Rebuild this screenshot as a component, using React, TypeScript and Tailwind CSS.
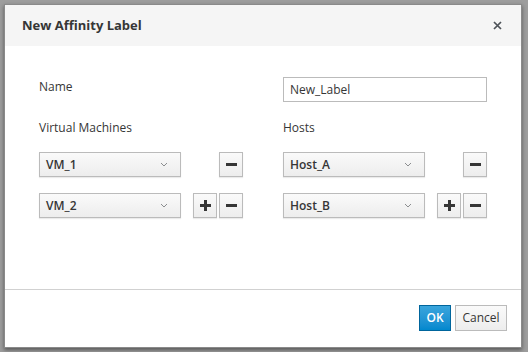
import React from 'react';

const font = { fontFamily: '"Open Sans", "Noto Sans", sans-serif' };

function Chevron() {
  return (
    <svg width="8" height="5" viewBox="0 0 8 5" className="text-[#8b8d8f]">
      <path d="M1 1 L4 4 L7 1" fill="none" stroke="currentColor" strokeWidth="1" />
    </svg>
  );
}

function Select({ value }: { value: string }) {
  return (
    <div className="w-[143px] h-[25px] flex items-center justify-between pl-[6px] pr-[12px] border border-[#bbbbbb] bg-gradient-to-b from-[#fafafa] to-[#ededed] shadow-[0_1px_1px_rgba(3,3,3,0.08)] text-[12px] font-semibold text-[#363636]">
      <span>{value}</span>
      <Chevron />
    </div>
  );
}

function IconBtn({ kind, hidden }: { kind: 'plus' | 'minus'; hidden?: boolean }) {
  return (
    <div
      className={
        'w-[24px] h-[25px] flex items-center justify-center border border-[#bbbbbb] bg-gradient-to-b from-[#fafafa] to-[#ededed] shadow-[0_1px_1px_rgba(3,3,3,0.08)] ' +
        (hidden ? 'invisible' : '')
      }
    >
      <svg width="11" height="11" viewBox="0 0 11 11">
        <rect x="0" y="4" width="11" height="3" fill="#363636" />
        {kind === 'plus' && <rect x="4" y="0" width="3" height="11" fill="#363636" />}
      </svg>
    </div>
  );
}

function Row({ value, plus }: { value: string; plus?: boolean }) {
  return (
    <div className="flex items-center">
      <Select value={value} />
      <div className="ml-[12px] flex gap-[2px]">
        <IconBtn kind="plus" hidden={!plus} />
        <IconBtn kind="minus" />
      </div>
    </div>
  );
}

export default function App() {
  return (
    <div className="w-[528px] h-[352px] bg-[#9d9d9d] pt-[4px] pl-[4px]" style={font}>
      <div className="w-[518px] h-[344px] bg-white border border-[#8a8a8a] shadow-[0_2px_4px_rgba(0,0,0,0.45)] flex flex-col">
        {/* Header */}
        <div className="h-[41px] bg-[#f5f5f5] flex items-center justify-between pl-[17px] pr-[19px]">
          <h4 className="text-[13px] font-bold text-[#363636]">New Affinity Label</h4>
          <svg width="9" height="9" viewBox="0 0 9 9">
            <path d="M1 1 L8 8 M8 1 L1 8" stroke="#4d5258" strokeWidth="1.7" />
          </svg>
        </div>

        {/* Body */}
        <div className="flex-1 pt-[31px] pl-[34px] flex gap-[40px] text-[12px] text-[#363636]">
          <div className="w-[204px] flex flex-col">
            <div className="h-[25px] flex items-center -mt-[3px]">Name</div>
            <div className="mt-[20px] h-[18px] leading-[18px]">Virtual Machines</div>
            <div className="mt-[15px] flex flex-col gap-[16px]">
              <Row value="VM_1" />
              <Row value="VM_2" plus />
            </div>
          </div>
          <div className="w-[204px] flex flex-col">
            <div className="h-[25px] flex items-center px-[6px] border border-[#bbbbbb] text-[12px] text-[#363636]">New_Label</div>
            <div className="mt-[17px] h-[18px] leading-[18px]">Hosts</div>
            <div className="mt-[15px] flex flex-col gap-[16px]">
              <Row value="Host_A" />
              <Row value="Host_B" plus />
            </div>
          </div>
        </div>

        {/* Footer */}
        <div className="h-[58px] border-t border-[#d1d1d1] flex justify-end items-start pt-[15px] pr-[14px] gap-[4px]">
          <div className="w-[32px] h-[26px] flex items-center justify-center bg-gradient-to-b from-[#39a5dc] to-[#0088ce] border border-[#00659c] text-white text-[12px] font-semibold">
            OK
          </div>
          <div className="w-[52px] h-[26px] flex items-center justify-center bg-gradient-to-b from-[#fafafa] to-[#ededed] border border-[#bbbbbb] text-[#363636] text-[12px]">
            Cancel
          </div>
        </div>
      </div>
    </div>
  );
}
